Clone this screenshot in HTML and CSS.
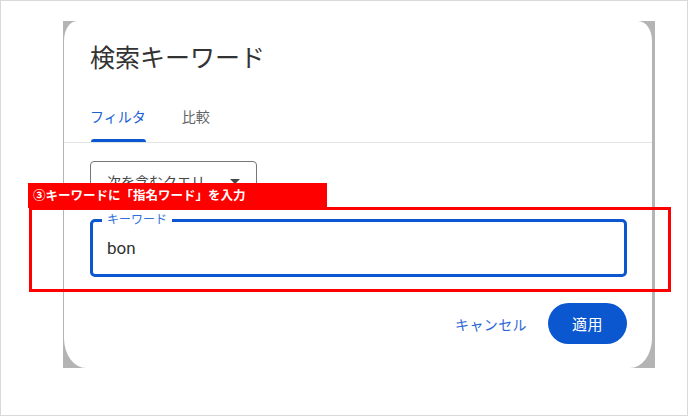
FILE: index.html
```html
<!DOCTYPE html>
<html lang="ja">
<head>
<meta charset="utf-8">
<title>検索キーワード</title>
<link rel="stylesheet" href="styles.css">
</head>
<body>
<div class="frame">
  <div class="backdrop">
    <div class="dialog">
      <div class="header">
        <h1 class="title">検索キーワード</h1>
      </div>
      <div class="tabs">
        <div class="tab active">
          <span class="tab-text">フィルタ</span>
          <span class="tab-ind"></span>
        </div>
        <div class="tab">
          <span class="tab-text">比較</span>
          <span class="tab-ind"></span>
        </div>
      </div>
      <div class="body">
        <div class="select">
          <span class="select-text">次を含むクエリ</span>
          <span class="select-arrow"></span>
        </div>
        <div class="field">
          <span class="field-label">キーワード</span>
          <span class="field-value">bon</span>
        </div>
        <div class="actions">
          <span class="btn-text">キャンセル</span>
          <span class="btn-filled">適用</span>
        </div>
      </div>
    </div>
  </div>
  <div class="note-box"></div>
  <div class="note-label">③キーワードに「指名ワード」を入力</div>
</div>
</body>
</html>
```
FILE: styles.css
```css
* { box-sizing: border-box; }
html, body { margin: 0; padding: 0; background: #fff; }
body {
  font-family: "Roboto", "Noto Sans CJK JP", sans-serif;
  color: #1f1f1f;
}
.frame {
  position: relative;
  width: 688px;
  height: 416px;
  border: 1px solid #d9d9d9;
  padding: 20px 0 0 62px;
}
.backdrop {
  width: 592px;
  height: 347px;
  background: #b4b4b4;
  padding: 0 3px 0 1px;
  display: flex;
}
.dialog {
  flex: 1;
  background: #fff;
  border-radius: 13px 14px 22px 22px / 20px 20px 30px 30px;
  display: flex;
  flex-direction: column;
}
.header { padding: 19px 25px 0 26px; }
.title {
  margin: 0;
  font-family: "Noto Sans CJK JP", sans-serif;
  font-weight: 400;
  font-size: 25px;
  line-height: 32px;
  color: #333333;
}
.tabs {
  margin-top: 34px;
  padding-left: 26px;
  display: flex;
  gap: 36px;
  border-bottom: 1px solid #e3e3e3;
}
.tab {
  display: flex;
  flex-direction: column;
  font-family: "Noto Sans CJK JP", sans-serif;
  font-size: 14px;
  line-height: 20px;
  color: #5f6368;
}
.tab-ind {
  margin-top: 13px;
  height: 3px;
  border-radius: 3px 3px 0 0;
  background: transparent;
}
.tab.active { color: #1a5fd6; }
.tab.active .tab-ind { background: #0b57d0; margin-left: 1px; }
.body {
  padding: 18px 25px 0 26px;
  display: flex;
  flex-direction: column;
}
.select {
  width: 167px;
  height: 40px;
  border: 1px solid #747775;
  border-radius: 4px;
  padding: 0 16px;
  display: flex;
  align-items: center;
  justify-content: space-between;
  font-family: "Noto Sans CJK JP", sans-serif;
  font-size: 14px;
  color: #444746;
}
.select-arrow {
  width: 0;
  height: 0;
  border-left: 5px solid transparent;
  border-right: 5px solid transparent;
  border-top: 5px solid #444746;
}
.field {
  position: relative;
  margin-top: 18px;
  height: 58px;
  border: 3px solid #0b57d0;
  border-radius: 5px;
  display: flex;
  align-items: center;
  padding-left: 14px;
}
.field-label {
  position: absolute;
  top: -11px;
  left: 9px;
  padding: 0 5px;
  background: #fff;
  font-family: "Noto Sans CJK JP", sans-serif;
  font-size: 12px;
  line-height: 16px;
  color: #2f6fdc;
}
.field-value {
  font-family: "Roboto", sans-serif;
  font-size: 17px;
  line-height: 24px;
  color: #303030;
}
.actions {
  margin-top: 26px;
  display: flex;
  justify-content: flex-end;
  align-items: center;
}
.btn-text {
  margin-right: 21px;
  font-family: "Noto Sans CJK JP", sans-serif;
  font-size: 14px;
  letter-spacing: 0.4px;
  color: #2a66d6;
}
.btn-filled {
  width: 79px;
  height: 41px;
  border-radius: 21px;
  background: #0b57d0;
  color: #fff;
  display: flex;
  align-items: center;
  justify-content: center;
  font-family: "Noto Sans CJK JP", sans-serif;
  font-size: 15px;
  letter-spacing: 0.5px;
}
.note-box {
  position: absolute;
  left: 28px;
  top: 206px;
  width: 642px;
  height: 85px;
  border: 3px solid #ff0000;
}
.note-label {
  position: absolute;
  left: 27px;
  top: 182px;
  width: 299px;
  height: 25px;
  background: #ff0000;
  color: #fff;
  font-family: "Noto Sans CJK JP", sans-serif;
  font-weight: 700;
  font-size: 12.5px;
  line-height: 24px;
  padding-left: 5px;
  white-space: nowrap;
}
```
